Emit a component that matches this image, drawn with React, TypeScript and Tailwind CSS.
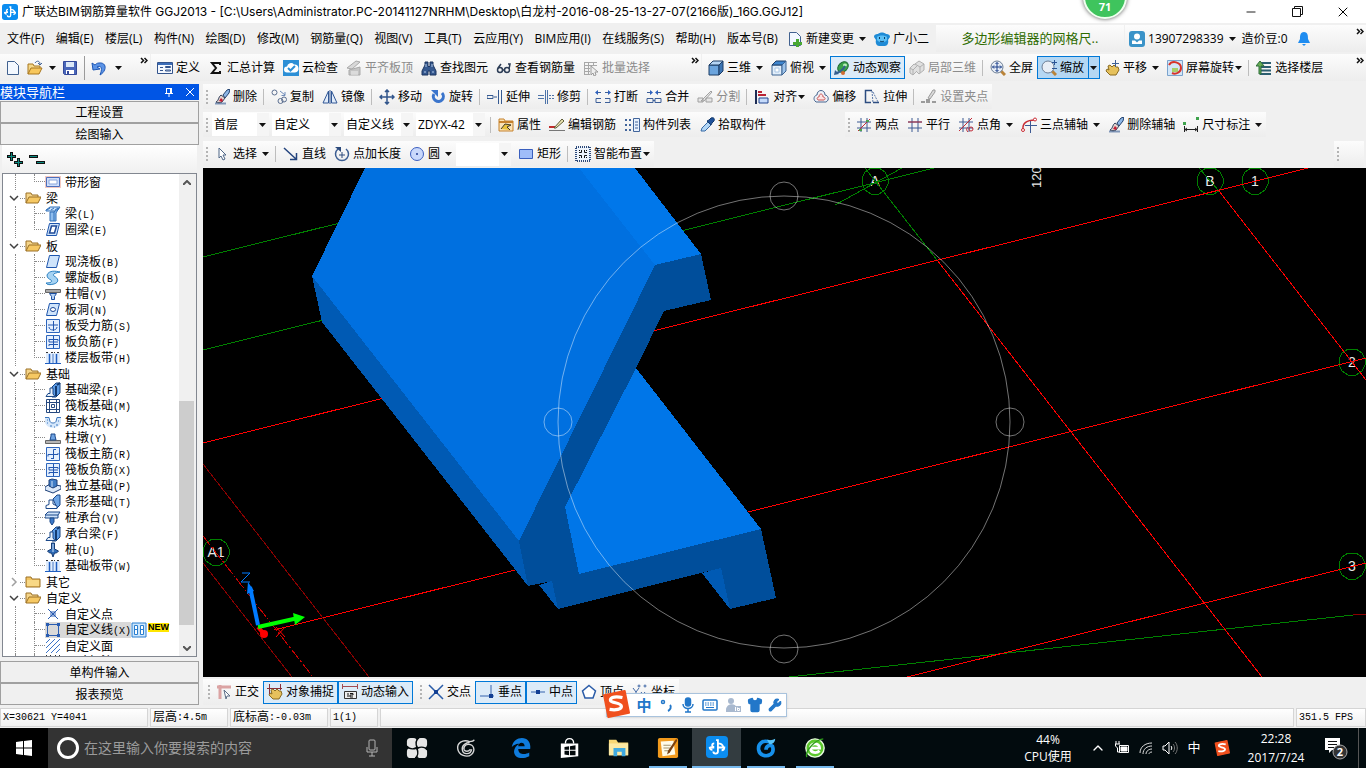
import type { ReactNode } from "react";
import { ChevronUp, Minus, Shirt, Wrench, X } from "lucide-react";

const UI_FONT = "font-['Open_Sans','Noto_Sans_CJK_SC',sans-serif]";
const BAR = "flex items-center bg-linear-to-b from-[#fcfcfc] to-[#ededed]";

const page = <path d="M2.500 1.500h7l4 4v9h-11z" fill="#f3f8ff" stroke="#41618f" />;
const axes = <path d="M1 5h14M1 11h14M5 1v14M11 1v14" stroke="#3d5a93" fill="none" />;
const slab = <path d="M4.500 1.500h10l-3 12h-10z" fill="#cfe4fb" stroke="#1f56ad" />;
const box = <path d="M1.500 1.500h13v13h-13z" fill="#e5f0fe" stroke="#2e66bd" />;
const brush = (
  <>
    <path d="M1 14.500h11" stroke="#8096b8" strokeWidth="2" />
    <path d="M9 6l4-5 3-1-1 4-4 5z" fill="#8db6e6" stroke="#24436f" />
    <path d="M7 6l4 3-3 4c-2 1-4 1-6 0 3-1 2-5 5-7z" fill="#e3d3cf" stroke="#34435e" />
    <path d="M7 9l2 2-1 2-3-1z" fill="#c32034" />
  </>
);
const beamBlock = (
  <>
    <path d="M7 5l4-4h4v10l-4 4H7z" fill="#5b9be6" stroke="#16427f" />
    <path d="M11 4v10M12 3l3-2" stroke="#123a70" strokeWidth="2" />
    <path d="M1 14.500l2-3h2V6h3v6l2 2.500z" fill="#e6f0fb" stroke="#1b4889" />
  </>
);
const floorStrip = (
  <>
    <path d="M1 3h14v10H1z" fill="#dfecfc" />
    <path d="M1 2.500h3M6 2.500h4M12 2.500h3" stroke="#333" strokeDasharray="2 1" />
    <path d="M0 13.500h16" stroke="#1f5ec0" />
    <path d="M4.500 4v9M11.500 4v9" stroke="#1f5ec0" strokeWidth="1.500" />
    <path d="M8 4v9" stroke="#4a7cc8" />
  </>
);
const magnifier = (
  <>
    <path d="M11 11l4 4" stroke="#b98339" strokeWidth="3" />
    <circle cx="7" cy="7" r="6" fill="#e8eef6" stroke="#6d7f96" />
  </>
);
const hand = <path d="M4 6l2-1 2 2 2-2 2 2 2 0 1 3-3 5H6L2 11l1-2 2 1z" fill="#e6c15c" stroke="#8a6b21" />;

const icons: Record<string, ReactNode> = {
  page,
  open: (
    <>
      <path d="M1 14V4h5l1 2h6v2" fill="#f5d889" stroke="#a8761f" />
      <path d="M1 14l3-6h11l-3 6z" fill="#f7c75d" stroke="#a8761f" />
      <path d="M8 3c2-3 5-2 5 1m-2-1l2 2 2-2" fill="none" stroke="#426497" />
    </>
  ),
  save: (
    <>
      <path d="M1.500 1.500h13v13h-12l-1-1z" fill="#4a67ba" stroke="#34499a" />
      <path d="M4 2h8v5H4z" fill="#dce8f7" />
      <path d="M4 10h8v4H4z" fill="#fff" />
      <path d="M5 11h2v3H5z" fill="#34499a" />
    </>
  ),
  undo: <path d="M1 3l1 7 7-1-3-2c4-2 6 1 3 8 7-4 7-13-1-12-2 0-3 1-4 2z" fill="#5b93e6" stroke="#1f58b5" />,
  form: (
    <>
      <path d="M.5 2.500h15v11H.5z" fill="#f4f8fe" stroke="#33548d" />
      <path d="M1 3h14v2H1z" fill="#3c6db8" />
      <path d="M3 7.500h3M3 10.500h3" stroke="#33548d" />
      <path d="M8.500 6.500h5v1h-5zM8.500 10h5v1h-5z" fill="none" stroke="#33548d" />
    </>
  ),
  sigma: <path d="M12 5V3H4l4 5-4 5h8v-2" fill="none" stroke="#111" strokeWidth="2" />,
  cloud: (
    <>
      <path d="M0 0h16v16H0z" fill="#2c8fd6" />
      <path d="M4 12.500a3 3 0 010-6 4 4 0 017-2 4 4 0 011 8z" fill="#fff" />
      <path d="M5 8l2.500 2.500L12 6" fill="none" stroke="#2c8fd6" strokeWidth="2" />
    </>
  ),
  level: (
    <>
      <path d="M1 8l9-7 4 1-8 7z" fill="#d8d8d8" stroke="#a9a9a9" />
      <path d="M3 10v5h11V7z" fill="#c4c4c4" stroke="#a9a9a9" />
      <path d="M5 12h7M5 14h7" stroke="#f2f2f2" />
    </>
  ),
  binoculars: (
    <>
      <path d="M4 2h3v4l1 1 1-1V2h3v3l3 6v4H9v-4H7v4H1v-4l3-6z" fill="#35588f" stroke="#1c355f" />
      <path d="M3 12h2M11 12h2M5 4v3M11 4v3" stroke="#b4cbea" />
    </>
  ),
  glasses: (
    <>
      <circle cx="4" cy="10" r="2.500" fill="none" stroke="#2c3c55" strokeWidth="1.500" />
      <circle cx="11" cy="10" r="2.500" fill="none" stroke="#2c3c55" strokeWidth="1.500" />
      <path d="M6 10h3M2 8l3-4M13 9l1-5h-2" fill="none" stroke="#2c3c55" strokeWidth="1.500" />
    </>
  ),
  batch: (
    <>
      <path d="M1 2.500h13M1 5.500h13M1 8.500h6M1 11.500h6M1 14.500h6M1.500 2v13M5.500 2v13M10.500 2v4" stroke="#a8a8a8" />
      <path d="M8 6l7 6h-3l1 3-2 1-1-3-2 2z" fill="#eee" stroke="#9b9b9b" />
    </>
  ),
  cube: (
    <>
      <path d="M1 5h10v10H1z" fill="#6ba4dd" stroke="#1d3c64" />
      <path d="M1 5l4-4h10l-4 4z" fill="#b5d5f4" stroke="#1d3c64" />
      <path d="M11 5l4-4v10l-4 4z" fill="#3c75b4" stroke="#1d3c64" />
    </>
  ),
  cubeTop: (
    <>
      <path d="M1 5h10v10H1z" fill="#e2eefa" stroke="#3c6493" />
      <path d="M1 5l4-4h10l-4 4z" fill="#3f86cf" stroke="#1d3c64" />
      <path d="M11 5l4-4v10l-4 4z" fill="#9fc4ea" stroke="#3c6493" />
      <path d="M4 8h4v4H4z" fill="#fff" stroke="#a9c6e4" />
    </>
  ),
  orbit: (
    <>
      <ellipse cx="9" cy="7" rx="6" ry="4.500" transform="rotate(-45 9 7)" fill="#3aa24a" stroke="#1f6a35" />
      <ellipse cx="11" cy="5" rx="2" ry="1.500" fill="#b9eebc" />
      <path d="M2 13C7 12 9 10 11 6" fill="none" stroke="#355f8f" strokeWidth="2" />
      <path d="M0 15l1-5 4 4z" fill="#355f8f" />
      <circle cx="9" cy="13" r="2" fill="#d06a32" />
    </>
  ),
  part3d: (
    <g stroke="#b0b0b0" fill="#e0e0e0">
      <path d="M1 8l4-4 3 2v5l-4 4-3-2z" />
      <path d="M6 4l4-3 5 3v6l-5 4-3-3" />
      <path d="M1 8l3 2 4-4M4 10v5M6 4l5 3 4-3M11 7v6" fill="none" />
    </g>
  ),
  fit: (
    <>
      {magnifier}
      <path d="M7 2.500v9M2.500 7h9M5.500 4L7 2.500 8.500 4M5.500 10L7 11.500 8.500 10M4 5.500L2.500 7 4 8.500M10 5.500L11.500 7 10 8.500" stroke="#1a3e8a" fill="none" />
    </>
  ),
  zoom: (
    <>
      {magnifier}
      <path d="M11 2.500h5M13.500 0v5M11 8.500h5" stroke="#2c5596" />
    </>
  ),
  pan: (
    <>
      {hand}
      <path d="M11.500 0v7M8 3.500h7" stroke="#3c5f95" />
    </>
  ),
  rotateView: (
    <>
      <path d="M.5.500h15v15H.5z" fill="#d3e6f8" stroke="#7aa3cd" />
      <path d="M5 8h6v4H5z" fill="#a8cf6a" />
      <path d="M2 5C5 0 14 2 14 8c0 4-5 7-9 5" fill="none" stroke="#d7332a" strokeWidth="2" />
    </>
  ),
  floors: (
    <>
      <path d="M4 3h11M4 7h11M4 10.500h11M4 14h11" stroke="#2c5e70" strokeWidth="2" />
      <path d="M0 6l4-5 4 5H5v8H3V6z" fill="#67ad53" stroke="#2c6c3b" />
    </>
  ),
  brush,
  copy: (
    <g fill="none" stroke="#5c6f90">
      <circle cx="3.500" cy="3.500" r="2.500" />
      <circle cx="9.500" cy="12" r="2.500" />
      <circle cx="13" cy="10.500" r="2.500" />
      <path d="M9 2l5 4M14 3v3.500h-3.500" stroke="#6f8bb9" />
    </g>
  ),
  mirror: <path d="M6.500 2v12H1zM9.500 2v12H15zM8 1v14" fill="#e1ecfa" stroke="#315795" />,
  move: <path d="M8 1v14M1 8h14M6 3l2-2 2 2M6 13l2 2 2-2M3 6L1 8l2 2M13 6l2 2-2 2" fill="none" stroke="#32568c" strokeWidth="1.500" />,
  rotate: (
    <>
      <path d="M4 5a5 5 0 108-1" fill="none" stroke="#3b75cc" strokeWidth="3" />
      <path d="M1 1h7v7z" fill="#3b75cc" />
    </>
  ),
  extend: <path d="M0 6.500h6v3H0zM7 8h3M11.500 1v14M14.500 1v14" fill="none" stroke="#355a92" />,
  trim: <path d="M0 6.500h6M0 9.500h6M7.500 1v14M9.500 1v14M11 6.500h2M14 6.500h2M11 9.500h2M14 9.500h2" fill="none" stroke="#4d73a9" />,
  breakLine: (
    <>
      <path d="M0 3.500L3 1v5zM16 3.500L13 1v5z" fill="#2f62bd" />
      <path d="M3 3.500h3M10 3.500h3M6 9.500H1v4h5M10 9.500h5v4h-5" fill="none" stroke="#3d5f98" />
    </>
  ),
  merge: (
    <>
      <path d="M7 3.500L4 1v5zM9 3.500L12 1v5z" fill="#2f62bd" />
      <path d="M1 3.500h3M12 3.500h3M1 9.500h6v4H1zM9 9.500h6v4H9zM7 11.500h2" fill="none" stroke="#3d5f98" />
    </>
  ),
  split: <path d="M1 9h5v4H1zM9 9h6v4H9zM4 12l10-10 1 1-8 9z" fill="#e6e6e6" stroke="#a0a0a0" />,
  align: (
    <>
      <path d="M2 1v14" stroke="#1d2c55" strokeWidth="2" />
      <path d="M5 9h9v5H5z" fill="#c5dafa" stroke="#20448f" />
      <path d="M4 6h8M4 3h4" stroke="#b92435" strokeWidth="2" />
    </>
  ),
  offset: (
    <>
      <path d="M3 13C-1 10 2 6 4 6c0-6 8-6 8 0 3 0 5 5 1 7z" fill="#eef2f8" stroke="#46648f" />
      <path d="M5 11c-2-2 0-3 1-3 0-4 4-4 4 0 2 0 3 2 1 3z" fill="#fce3e3" stroke="#c95555" />
    </>
  ),
  stretch: (
    <>
      <path d="M8 1.500H1.500v12H7M9 13.500h6" fill="none" stroke="#2c4c80" strokeWidth="1.500" />
      <path d="M8 2l1 12M9 3l5 10" stroke="#5d7aa9" strokeDasharray="2 1" />
    </>
  ),
  grip: (
    <>
      <path d="M0 13h4M11 13h4" stroke="#9b9b9b" strokeWidth="2" />
      <path d="M5 10h4v4H5z" fill="#9b9b9b" />
      <path d="M7 9l5-8h2v2L9 10z" fill="#d9d9d9" stroke="#9b9b9b" />
    </>
  ),
  props: (
    <>
      <path d="M1 2h5l1 2h8v10H1z" fill="#fbe2b6" stroke="#c6822d" />
      <path d="M1 5h14" stroke="#c6822d" strokeWidth="2" />
      <path d="M3 12l4-5 6 1-4 2 3 3" fill="#e9c13b" stroke="#3f3a28" />
    </>
  ),
  rebar: (
    <>
      <path d="M0 13.500h16" stroke="#777" />
      <path d="M0 10h6" stroke="#c02d2d" strokeWidth="2" />
      <path d="M5 11l8-9 2 2-8 7z" fill="#ece5b2" stroke="#5c5a36" />
    </>
  ),
  list: (
    <>
      <path d="M1 3h2M5 3h2M1 8h2M5 8h2M1 13h2M5 13h2" stroke="#42659b" strokeWidth="2" />
      <path d="M9.500 1.500h6v13h-6z" fill="#e8f1fd" stroke="#42659b" />
      <path d="M11 5h3M11 8h3M11 11h3" stroke="#42659b" />
    </>
  ),
  dropper: (
    <>
      <path d="M2 14l1-3 6-6 3 3-6 6z" fill="#b2d6f6" stroke="#386aa5" />
      <path d="M8 4l2-1 2-2c3-1 4 1 3 3l-2 2-1 2z" fill="#1e5199" stroke="#133869" />
    </>
  ),
  twoPoint: (
    <>
      {axes}
      <path d="M2 14L14 2" stroke="#c12c38" />
      <path d="M3 12h3v2H3zM10 3h3v2h-3z" fill="#4aa24f" />
    </>
  ),
  parallel: (
    <>
      {axes}
      <path d="M1 5h14" stroke="#b22a3c" />
    </>
  ),
  angle: (
    <>
      {axes}
      <path d="M1 14L14 1M10 15c-3-3 0-5 0-5" stroke="#c12c38" fill="none" />
      <circle cx="13" cy="12" r="2" fill="none" stroke="#c12c38" />
    </>
  ),
  arcAxis: (
    <>
      <path d="M4 8.500h12M9.500 4v12" stroke="#3d5a93" />
      <path d="M2 13C1 6 6 3 14 3" fill="none" stroke="#c92c35" strokeWidth="1.500" />
      <circle cx="2" cy="13" r="1.500" fill="#fff" stroke="#c92c35" />
      <circle cx="14" cy="2.500" r="1.500" fill="#fff" stroke="#c92c35" />
    </>
  ),
  dimension: (
    <>
      <path d="M1.500 9v6M14.500 9v6M2 12.500h12M4 11l-2 1.500L4 14M12 11l2 1.500-2 1.500" stroke="#222" fill="none" />
      <path d="M0 5h3v3H0zM13 0h3v3h-3z" fill="#3ea34c" />
    </>
  ),
  cursor: <path d="M5 2v10l2-2 2 4 2-1-2-4h3z" fill="#fff" stroke="#4f6787" />,
  line: <path d="M1 2l12 11M7 13.500h6.500V7" fill="none" stroke="#24447e" strokeWidth="1.500" />,
  pointLen: (
    <>
      <path d="M4 3a6.500 6.500 0 108 0" fill="none" stroke="#3b5d92" strokeWidth="1.500" />
      <path d="M1 1h6v5z" fill="#2c4a7c" />
      <path d="M8 6v6M5 9h6" stroke="#2c4a7c" />
    </>
  ),
  circle: (
    <>
      <circle cx="8" cy="8" r="6.500" fill="#c9d8fb" stroke="#3c5fc0" />
      <circle cx="8" cy="8" r="1" fill="#213d95" />
    </>
  ),
  rect: <path d="M1.500 3.500h13v9h-13z" fill="#9fbdf9" stroke="#3a5fbe" />,
  smart: (
    <>
      <path d="M1 1h14v14H1z" fill="#eef4fc" stroke="#2d4a7a" strokeWidth="2" strokeDasharray="1 1" />
      <path d="M6.500 4v2.500H4M9.500 4v2.500H12M6.500 12V9.500H4M9.500 12V9.500H12" fill="none" stroke="#111" />
      <path d="M4 4h1v1H4zM11 4h1v1h-1zM4 11h1v1H4zM11 11h1v1h-1z" fill="#111" />
    </>
  ),
  ortho: (
    <>
      <path d="M1 3h14M4 1v14" stroke="#dba3a3" strokeWidth="3" />
      <path d="M8 6l6 6-3 0-1 3z" fill="#fff" stroke="#5c6d86" />
    </>
  ),
  snap: (
    <>
      {hand}
      <path d="M0 4.500h15M2.500 0v10M13.500 0v6" stroke="#8a3038" />
    </>
  ),
  dynInput: (
    <>
      <path d="M.5 0v5M15.500 0v5M1 2.500h14" stroke="#a34a52" />
      <path d="M2.500 7.500h12v7h-12z" fill="#eee" stroke="#333" />
      <path d="M6 9v4M8 9.500h3v1.500H8v2h3" stroke="#111" fill="none" />
    </>
  ),
  cross: (
    <>
      <path d="M1 1l14 14M15 1L1 15" stroke="#2b5ca8" strokeWidth="1.500" />
      <path d="M6 6h4v4H6z" fill="#123f93" />
    </>
  ),
  perp: (
    <>
      <path d="M1 12h14M12 1v11" stroke="#3563ad" />
      <path d="M10 10h4v4h-4z" fill="#123f93" />
    </>
  ),
  mid: (
    <>
      <path d="M1 8h14" stroke="#3563ad" />
      <path d="M6 6h4v4H6z" fill="#123f93" />
    </>
  ),
  vertex: <path d="M8 1.500L14.500 7 12 14H4L1.500 7z" fill="#fff" stroke="#2b5ca8" strokeWidth="1.500" />,
  coord: (
    <g fill="none" stroke="#3f67a6">
      <path d="M1 4l3 4v5M7 4L4 8M1 14.500h13M9 8l4 5M13 8l-4 5" />
      <circle cx="7" cy="2" r="1" />
      <circle cx="13" cy="2" r="1" />
    </g>
  ),
  changeDoc: (
    <>
      {page}
      <path d="M9 8h3v3h3v3h-3v2H9v-2H6v-3h3z" fill="#49a833" />
    </>
  ),
  mascot: (
    <>
      <path d="M0 6c0-3 3-3 4-3 2-2 6-2 8 0 1 0 4 0 4 3l-2 3c1 3-1 6-3 6H5c-2 0-4-3-3-6z" fill="#1f8bd6" />
      <path d="M3 6c2-2 8-2 10 0v3c-2 3-8 3-10 0z" fill="#5cc0f5" />
      <path d="M5 7h1M10 7h1" stroke="#0d3f68" strokeWidth="2" />
      <path d="M6 10c1 1 3 1 4 0" fill="none" stroke="#0d3f68" />
    </>
  ),
  user: (
    <>
      <rect width="16" height="16" rx="3" fill="#3a93c8" />
      <circle cx="8" cy="5.500" r="3" fill="#fff" />
      <path d="M3 13V9.500h3l2 2 2-2h3V13z" fill="#fff" />
    </>
  ),
  bell: (
    <>
      <path d="M8 1c4 0 4 4 4 7l2 4H2l2-4c0-3 0-7 4-7z" fill="#1f8cf0" />
      <path d="M6 13h4l-2 2z" fill="#1f8cf0" />
    </>
  ),
  // component tree
  stripWindow: (
    <>
      <path d="M0 2h16v12H0z" fill="#f2c9c1" />
      <path d="M1.500 3.500h13v9h-13z" fill="#cfdefa" stroke="#4c6fbd" />
      <path d="M4 6h8v4H4z" fill="#fff" stroke="#8aa6dc" />
    </>
  ),
  beam: (
    <>
      <path d="M1 4l4-3h10l-3 4H1z" fill="#c8e0fa" stroke="#2f6fb8" />
      <path d="M5 6h4v9H5zM9 6l5-4-3 5v8H9" fill="#8ebdee" stroke="#2f6fb8" />
      <path d="M2 4l3-2M6 4l3-2M10 4l3-2" stroke="#2f6fb8" />
    </>
  ),
  ringBeam: (
    <>
      {slab}
      <path d="M6.500 4h5l-2 7h-5z" fill="#fff" stroke="#1f4a98" strokeWidth="1.500" />
    </>
  ),
  slab,
  spiral: <path d="M2 5c2-5 9-4 13-3-5 1-8 2-6 4 4 2 6 6 0 8-4 1-7 1-8-1 4 0 7-1 5-3-2-1-4-2-4-5z" fill="#a6d3f3" stroke="#2d82c3" />,
  capital: (
    <>
      <path d="M.5 3.500h15v3H.5z" fill="#a9a9a9" stroke="#666" />
      <path d="M4.500 7.500h7l-2 3v3h-3v-3z" fill="#b6d2f5" stroke="#1b4fa0" />
    </>
  ),
  hole: (
    <>
      {slab}
      <ellipse cx="8" cy="7.500" rx="2.500" ry="2" fill="#fff" stroke="#1f4a98" />
    </>
  ),
  forceBar: (
    <>
      {box}
      <path d="M3 7h10M8.500 3v10M4 9c0 4 8 4 8 0" fill="none" stroke="#2257b0" />
    </>
  ),
  negBar: (
    <>
      {box}
      <path d="M4 12V10.500h9M4 5.500h9V7M8.500 2v12M4 5v3h9" fill="none" stroke="#2257b0" />
    </>
  ),
  floorStrip,
  beamBlock,
  raft: (
    <>
      <path d="M1.500 1.500h13v13h-13z" fill="#fff" stroke="#26497f" />
      <path d="M4.500 1v14M11.500 1v14M1 4.500h14M1 11.500h14M6.500 6.500h3v3h-3z" fill="none" stroke="#26497f" />
    </>
  ),
  sump: (
    <>
      <path d="M0 3.500h4l1 4c1 2 5 2 6 0l1-4h4v5c-2 7-14 7-16 0z" fill="#d5e7fb" />
      <path d="M0 3.500h4l1 4c1 2 5 2 6 0l1-4h4" fill="none" stroke="#3b76bd" />
      <path d="M2 9h1M5 12h2M9 13h1M11 11h2M2 6h1M13 7h1" stroke="#3b76bd" />
    </>
  ),
  pier: (
    <>
      <path d="M.5 10.500h15v3H.5z" fill="#b5b5b5" stroke="#666" />
      <path d="M5 10l1-4V4h4v2l1 4z" fill="#6fa3e2" stroke="#1b4889" />
    </>
  ),
  mainBar: (
    <>
      {box}
      <path d="M3 10.500V8.500h10V7M8.500 12V3.500H11M6 12.500h3" fill="none" stroke="#2257b0" />
    </>
  ),
  isolated: (
    <>
      <path d="M0 9l5-3 11 2v3l-8 4-8-3z" fill="#dce9f9" stroke="#1c3f77" />
      <path d="M4 2l3-1 5 1v6l-4 2-4-2z" fill="#3f7cc5" stroke="#1c3f77" />
      <path d="M7 3v6" stroke="#cfe2f8" />
    </>
  ),
  stripBase: (
    <>
      <path d="M8 5l4-4h3v10l-3 3z" fill="#6fa6e6" stroke="#1b4889" />
      <path d="M1 14.500v-3l3-1V6h4v4l4 2v2.500z" fill="#fff" stroke="#1b4889" />
    </>
  ),
  pileCap: (
    <>
      <path d="M0 5l3-3h12l-2 3v3H0zM0 5h13" fill="#cfe3fa" stroke="#1b4889" />
      <path d="M5 8h4v4l-2 3-2-3z" fill="#3b78c8" stroke="#1b4889" />
    </>
  ),
  pile: (
    <>
      <path d="M6.500 1h3v6l4 2-2 2h-2L8 15l-1.500-4h-2l-2-2 4-2z" fill="#2f6db9" stroke="#163c74" />
      <path d="M8 2v8" stroke="#cfe3fa" />
    </>
  ),
  customPoint: <path d="M3 3l10 10M13 3L3 13M6 6h4v4H6z" fill="#fff" stroke="#2a5db2" />,
  customLine: (
    <>
      <path d="M2.500 2.500h11v11h-11z" fill="none" stroke="#2a5db2" />
      <path d="M1 1h3v3H1zM12 1h3v3h-3zM1 12h3v3H1zM12 12h3v3h-3z" fill="#2a5db2" />
    </>
  ),
  customFace: <path d="M1 5l4-4M1 10l9-9M1 15L15 1M6 15l9-9M11 15l4-4" stroke="#3a73c8" />,
  sizeMark: <path d="M1.500 1v8M14.500 1v8M5.500 1v8M10.500 1v8M1 5h14" stroke="#333" fill="none" />,
  folder: (
    <>
      <path d="M1 13V3h5l1 2h8v8z" fill="#f2c463" stroke="#9b7127" />
      <path d="M2 6h12v6H2z" fill="#f8d886" />
    </>
  ),
  folderOpen: (
    <>
      <path d="M1 13V3h5l1 2h6v3" fill="#f5d58a" stroke="#9b7127" />
      <path d="M1 13l3-6h12l-3 6z" fill="#f6c863" stroke="#9b7127" />
    </>
  ),
};

function Icon({ name, className = "size-4" }: { name: string; className?: string }) {
  return (
    <svg viewBox="0 0 16 16" fill="none" className={`${className} shrink-0`} aria-hidden>
      {icons[name]}
    </svg>
  );
}

function Caret({ tight = false }: { tight?: boolean }) {
  return (
    <svg viewBox="0 0 7 4" className={`h-1 w-[7px] shrink-0 ${tight ? "-ml-0.5" : "ml-0.5"}`} aria-hidden>
      <path d="M0 0h7L3.500 4z" fill="#111" />
    </svg>
  );
}

type ToolProps = { icon: string; label: string; off?: boolean; on?: boolean; caret?: boolean; tight?: boolean };

function Tool({ icon, label, off, on, caret, tight }: ToolProps) {
  const look = on ? "bg-[#dcebf8] outline outline-1 -outline-offset-1 outline-[#0078d7]" : "";
  return (
    <button disabled={off} className={`flex h-[23px] shrink-0 items-center gap-[3px] px-1 whitespace-nowrap ${look} ${off ? "text-[#8b8b8b]" : ""}`}>
      <Icon name={icon} />
      <span>{label}</span>
      {caret && <Caret />}
      {tight && <Caret tight />}
    </button>
  );
}

function Sep() {
  return <span className="mr-[3px] ml-0.5 h-4 w-px shrink-0 bg-[#bdbdbd]" />;
}

function Grip() {
  return (
    <span className="flex w-[7px] shrink-0 flex-col items-center gap-0.5 pl-px">
      {[0, 1, 2, 3].map((i) => (
        <span key={i} className="size-0.5 bg-[#b4b4b4]" />
      ))}
    </span>
  );
}

function More() {
  return (
    <button className="flex h-full items-start px-0.5 pt-0.5" aria-label="更多">
      <svg viewBox="0 0 8 7" className="mt-px h-[7px] w-2" fill="none" stroke="#111" strokeWidth="1.500">
        <path d="M1 1l2.500 2.500L1 6M4.500 1L7 3.500 4.500 6" />
      </svg>
    </button>
  );
}

function Combo({ value, label, className }: { value: string; label: string; className: string }) {
  return (
    <label className={`mr-[3px] flex h-[23px] shrink-0 items-center bg-white pl-0.5 ${className}`}>
      <select aria-label={label} className="w-0 flex-1 appearance-none bg-white outline-none">
        <option>{value}</option>
      </select>
      <span className="flex h-full w-3 items-center justify-center bg-[#f5f5f5]">
        <Caret tight />
      </span>
    </label>
  );
}

const menus = ["文件(F)", "编辑(E)", "楼层(L)", "构件(N)", "绘图(D)", "修改(M)", "钢筋量(Q)", "视图(V)", "工具(T)", "云应用(Y)", "BIM应用(I)", "在线服务(S)", "帮助(H)", "版本号(B)"];

type Leaf = { icon: string; name: string; hotkey?: string; selected?: boolean };
type Group = { name?: string; closed?: boolean; items: Leaf[] };

const tree: Group[] = [
  { items: [{ icon: "stripWindow", name: "带形窗" }] },
  { name: "梁", items: [{ icon: "beam", name: "梁", hotkey: "L" }, { icon: "ringBeam", name: "圈梁", hotkey: "E" }] },
  {
    name: "板",
    items: [
      { icon: "slab", name: "现浇板", hotkey: "B" },
      { icon: "spiral", name: "螺旋板", hotkey: "B" },
      { icon: "capital", name: "柱帽", hotkey: "V" },
      { icon: "hole", name: "板洞", hotkey: "N" },
      { icon: "forceBar", name: "板受力筋", hotkey: "S" },
      { icon: "negBar", name: "板负筋", hotkey: "F" },
      { icon: "floorStrip", name: "楼层板带", hotkey: "H" },
    ],
  },
  {
    name: "基础",
    items: [
      { icon: "beamBlock", name: "基础梁", hotkey: "F" },
      { icon: "raft", name: "筏板基础", hotkey: "M" },
      { icon: "sump", name: "集水坑", hotkey: "K" },
      { icon: "pier", name: "柱墩", hotkey: "Y" },
      { icon: "mainBar", name: "筏板主筋", hotkey: "R" },
      { icon: "negBar", name: "筏板负筋", hotkey: "X" },
      { icon: "isolated", name: "独立基础", hotkey: "P" },
      { icon: "stripBase", name: "条形基础", hotkey: "T" },
      { icon: "pileCap", name: "桩承台", hotkey: "V" },
      { icon: "beamBlock", name: "承台梁", hotkey: "F" },
      { icon: "pile", name: "桩", hotkey: "U" },
      { icon: "floorStrip", name: "基础板带", hotkey: "W" },
    ],
  },
  { name: "其它", closed: true, items: [] },
  {
    name: "自定义",
    items: [
      { icon: "customPoint", name: "自定义点" },
      { icon: "customLine", name: "自定义线", hotkey: "X", selected: true },
      { icon: "customFace", name: "自定义面" },
      { icon: "sizeMark", name: "尺寸标注", hotkey: "W" },
    ],
  },
];

function LeafRow({ leaf, last }: { leaf: Leaf; last: boolean }) {
  const dots = "border-dotted border-[#8a8a8a]";
  return (
    <li className="flex h-4 items-center">
      <span className={`ml-3 h-full w-[19px] shrink-0 border-l ${dots}`} />
      <span className={`h-full w-[11px] shrink-0 ${last ? "" : `border-l ${dots}`}`}>
        <span className={`block h-1/2 border-b ${dots} ${last ? "border-l" : ""}`} />
      </span>
      <button className={`flex h-4 items-center gap-1 whitespace-nowrap ${leaf.selected ? "bg-[#d9d9d9]" : ""}`}>
        <Icon name={leaf.icon} />
        <span>
          {leaf.name}
          {leaf.hotkey && <span className="font-['Liberation_Mono',monospace] text-[10px]">({leaf.hotkey})</span>}
        </span>
      </button>
      {leaf.selected && (
        <>
          <svg viewBox="0 0 16 16" className="size-4 shrink-0" fill="#fff" stroke="#2a7fd0" aria-hidden>
            <path d="M1 1h14v14H1z" fill="#cde6fb" />
            <path d="M3.500 3.500h3v9h-3zM9.500 3.500h3v9h-3zM4 7.500h2M10 7.500h2" />
          </svg>
          <span className="mb-1.5 ml-px bg-[#ffe600] font-['Liberation_Sans',sans-serif] text-[9px] leading-[9px] font-bold">NEW</span>
        </>
      )}
    </li>
  );
}

function Sidebar() {
  const tab = "h-[22px] shrink-0 border border-[#a0a0a0] bg-[#f0f0f0] text-xs leading-5";
  const arrow = "flex h-4 shrink-0 items-center justify-center";
  return (
    <aside className="mr-1 flex w-[199px] shrink-0 flex-col font-['Noto_Sans_CJK_SC',sans-serif] text-xs">
      <header className="mb-px flex h-4 shrink-0 items-center bg-[#0055e5] text-[13px] leading-4 text-white">
        <h2 className="flex-1">模块导航栏</h2>
        <button className="mr-3" aria-label="固定">
          <svg viewBox="0 0 10 10" className="size-2.5" fill="none" stroke="#fff">
            <path d="M2.500 1v5M7.500 1v5M6.500 1v5M2 1.500h6M1 6.500h8M5 7v3" />
          </svg>
        </button>
        <button className="mr-[5px]" aria-label="关闭">
          <svg viewBox="0 0 8 8" className="size-2" stroke="#fff">
            <path d="M0 0l8 8M8 0L0 8" />
          </svg>
        </button>
      </header>
      <button className={tab}>工程设置</button>
      <button className={tab}>绘图输入</button>
      <div className="mx-0.5 flex h-7 shrink-0 items-center gap-1.5 bg-linear-to-b from-white to-[#f0f0f0] px-1">
        <button aria-label="展开">
          <svg viewBox="0 0 17 16" className="h-4 w-[17px]" fill="none">
            <path d="M1 5.500h9M5.500 1v9M8 11.500h9M12.500 7v9" stroke="#111" strokeWidth="3" />
            <path d="M2 5.500h7M5.500 2v7M9 11.500h7M12.500 8v7" stroke="#0c8a80" />
          </svg>
        </button>
        <button aria-label="折叠">
          <svg viewBox="0 0 17 16" className="h-4 w-[17px]" fill="none">
            <path d="M0 5.500h9M7 11.500h9" stroke="#111" strokeWidth="3" />
            <path d="M1 5.500h7M8 11.500h7" stroke="#0c8a80" />
          </svg>
        </button>
      </div>
      <div className="mx-0.5 mb-1 flex min-h-0 flex-1 border border-[#828790] bg-white">
        <ul className="min-w-0 flex-1 overflow-hidden leading-4">
          {tree.map((g, n) => (
            <li key={n}>
              {g.name && (
                <button className="flex h-4 items-center pl-[5px]">
                  <svg viewBox="0 0 12 12" className="size-3" fill="none" strokeWidth="1.500">
                    {g.closed ? <path d="M4 2l4 4-4 4" stroke="#a0a0a0" /> : <path d="M2 4l4 4 4-4" stroke="#404040" />}
                  </svg>
                  <span className="w-[5px] border-t border-dotted border-[#8a8a8a]" />
                  <Icon name={g.closed ? "folder" : "folderOpen"} />
                  <span className="ml-[5px]">{g.name}</span>
                </button>
              )}
              <ul>
                {g.items.map((leaf, i) => (
                  <LeafRow key={leaf.name} leaf={leaf} last={i === g.items.length - 1} />
                ))}
              </ul>
            </li>
          ))}
        </ul>
        <div className="flex w-[17px] shrink-0 flex-col bg-[#f0f0f0] pr-0.5">
          <span className={arrow}>
            <svg viewBox="0 0 8 5" className="h-[5px] w-2" fill="none" stroke="#555" strokeWidth="2">
              <path d="M0 5l4-4 4 4" />
            </svg>
          </span>
          <span className="flex-[211]" />
          <span className="flex-[225] bg-[#cdcdcd]" />
          <span className="flex-[15]" />
          <span className={arrow}>
            <svg viewBox="0 0 8 5" className="h-[5px] w-2" fill="none" stroke="#555" strokeWidth="2">
              <path d="M0 0l4 4 4-4" />
            </svg>
          </span>
        </div>
      </div>
      <button className={tab}>单构件输入</button>
      <button className={`${tab} mb-0.5`}>报表预览</button>
    </aside>
  );
}

const bubbles: [number, number, string][] = [
  [875, 181, "A"],
  [1210, 181, "B"],
  [1255, 181, "1"],
  [1352, 362, "2"],
  [1352, 566, "3"],
  [216, 552, "A1"],
];

function Scene() {
  return (
    <svg viewBox="203 168 1163 509" preserveAspectRatio="xMinYMin slice" className="min-h-0 w-full flex-1 bg-black" fill="none">
      <g fill="#e8e8e8" textAnchor="middle" className="font-['Liberation_Sans',sans-serif] text-[14px]">
        {bubbles.map(([x, y, t]) => (
          <text key={t} x={x} y={y + 5}>{t}</text>
        ))}
        <text transform="translate(1041 188) rotate(-90)" textAnchor="start" className="text-[13px]">120</text>
      </g>
      <g shapeRendering="crispEdges">
        <g stroke="#008000">
          <path d="M203 257L400 208M203 350L934 168M865 168L937 260M835 205L902 168M1199 168L1219 191M789 677L1353 615" />
          {bubbles.map(([x, y, t]) => (
            <path key={t} d={`M${x - 4} ${y - 13}h8l6 4 3 6v6l-3 6-6 4h-8l-6-4-3-6v-6l3-6z`} />
          ))}
        </g>
        <path d="M203 443L1308 168M274 630L1366 358M907 677L1366 563M937 260L1262 677M1219 191L1366 380" stroke="#ff0000" />
        <path d="M203 464L369 677M203 563L292 677M1353 615L1366 614" stroke="#8b0000" />
        <path d="M203 536L313 677" stroke="#c80000" strokeDasharray="12 2 2 2" />
        <path d="M365 168L312 276 519 541 655 265 579 168z" fill="#0070e0" />
        <path d="M579 168h56l66 86-46 11z" fill="#0077ea" />
        <path d="M312 276l10 46 206 264-9-45z" fill="#005ab4" />
        <path d="M636 368l125 161-182 45-14-67z" fill="#0076e8" />
        <path d="M539 585l13-4 6 28zM702 573l19-5 9 41z" fill="#005ab4" />
        <path d="M655 265l46-11 10 46-47 11-28 57-71 139 14 67 182-45 15 69-46 11-9-41-163 41-6-28-24 5-9-45z" fill="#004e9b" />
      </g>
      <g stroke="#fff" strokeOpacity="0.45">
        <circle cx="784" cy="422" r="226" />
        <circle cx="784" cy="196" r="14" />
        <circle cx="784" cy="649" r="14" />
        <circle cx="558" cy="422" r="14" />
        <circle cx="1010" cy="422" r="14" />
      </g>
      <path d="M258 627l6 7" stroke="#f00" strokeWidth="4" />
      <circle cx="264" cy="634" r="4" fill="#f00" />
      <path d="M276 627l9 10M285 627l-9 10" stroke="#f00" />
      <path d="M258 627l40-9" stroke="#0f0" strokeWidth="4" />
      <path d="M293 613l12 4-10 8z" fill="#0f0" />
      <path d="M258 625l-8-38" stroke="#007bff" strokeWidth="4" />
      <path d="M248 582l6 9-7 3z" fill="#007bff" />
      <path d="M242 573h8l-9 9h9" stroke="#007bff" />
    </svg>
  );
}

function SogouLogo({ className }: { className: string }) {
  return (
    <svg viewBox="0 0 26 26" className={className} aria-hidden>
      <path d="M2 5L21 1l4 20-19 4z" fill="#f0501e" stroke="#f0501e" strokeWidth="2" strokeLinejoin="round" />
      <path d="M19 7C10 5 7 8 8 10s10 2 10 5-5 4-11 3" fill="none" stroke="#fff" strokeWidth="3" />
    </svg>
  );
}

function AppLogo({ className }: { className: string }) {
  return (
    <svg viewBox="0 0 24 24" className={className} fill="none" aria-hidden>
      <rect width="24" height="24" rx="4" fill="#0b8df0" />
      <path d="M11 4.500h3M13 5v12c0 3-5 3-5 0M4 12.500h5M4 12c0 3 1 3 3 3M13 12.500h7c0 2-1 3-3 3M9 12c-3 0-3-4 0-4M13 8c3 0 5 1 6 4" stroke="#fff" strokeWidth="2" />
    </svg>
  );
}

function Mic({ className }: { className: string }) {
  return (
    <svg viewBox="0 0 16 18" className={className} fill="none" stroke="currentColor" aria-hidden>
      <rect x="5" y="1" width="6" height="10" rx="1" />
      <path d="M3 8v5h10V8M8 13v4M5 17h6" />
    </svg>
  );
}

function ImeBar() {
  return (
    <div className="absolute bottom-[51px] left-[606px] flex h-6 w-[181px] items-center border border-[#a9c3dd] bg-white pl-[26px] text-[#2277c9] shadow">
      <SogouLogo className="absolute -top-1 -left-[5px] size-7" />
      <button className="w-[22px] text-[15px] leading-5 font-bold">中</button>
      <button className="flex w-[21px] justify-center" aria-label="标点">
        <svg viewBox="0 0 14 14" className="size-3.5" fill="none" stroke="currentColor">
          <circle cx="4" cy="4" r="1.500" strokeWidth="1.500" />
          <path d="M11 7c2 2 0 5-2 6" strokeWidth="2" />
        </svg>
      </button>
      <button className="flex w-[23px] justify-center" aria-label="语音">
        <svg viewBox="0 0 14 16" className="h-4 w-3.5" fill="none" stroke="currentColor" strokeWidth="1.500">
          <rect x="4.500" y="1" width="5" height="8" rx="2.500" fill="currentColor" />
          <path d="M2 7c0 6 10 6 10 0M7 12v3M4 15h6" />
        </svg>
      </button>
      <button className="flex w-[22px] justify-center" aria-label="软键盘">
        <svg viewBox="0 0 16 12" className="h-3 w-4" fill="none" stroke="currentColor">
          <rect x="1" y="1" width="14" height="10" rx="1" strokeWidth="1.500" />
          <path d="M3 4h10M3 6h10" strokeDasharray="1.500 1" />
          <path d="M4 8.500h8" />
        </svg>
      </button>
      <button className="flex w-[24px] justify-center text-[#a9b9cf]" aria-label="登录">
        <svg viewBox="0 0 16 16" className="size-4" fill="currentColor">
          <circle cx="6" cy="4" r="3" />
          <path d="M1 13c0-7 10-7 10-3v5H1zM8 9h8v6H8z" />
          <path d="M10.500 10v4M12.500 10.500v3h2v-2h-2" fill="none" stroke="#fff" />
        </svg>
      </button>
      <button className="flex w-[19px] justify-center" aria-label="皮肤"><Shirt className="size-4 fill-current" /></button>
      <button className="flex w-[22px] justify-center" aria-label="工具箱"><Wrench className="size-3.5 fill-current" /></button>
    </div>
  );
}

const pinned: { name: string; state?: string; art: ReactNode }[] = [
  {
    name: "风扇",
    art: (
      <>
        <g fill="#e6e6e6">
          <rect x="1" y="1" width="11" height="11" rx="4" />
          <rect x="12" y="1" width="11" height="11" rx="4" />
          <rect x="1" y="12" width="11" height="11" rx="4" />
          <rect x="12" y="12" width="11" height="11" rx="4" />
        </g>
        <path d="M14 1c-3 2-4 5-2 11M23 14c-2-3-5-4-11-2M10 23c3-2 4-5 2-11M1 10c2 3 5 4 11 2" stroke="#02090b" strokeWidth="1.500" />
      </>
    ),
  },
  {
    name: "浏览器",
    art: (
      <path d="M21 3c-1 2-3 2-5 2C8 2 2 7 3 13c1 7 10 10 15 6 5-5 2-11-3-11-4 0-6 3-5 6 1 2 5 2 6 0h2c-1 5-9 6-10 0-1-5 4-8 8-8" stroke="#d8d8d8" strokeWidth="1.500" />
    ),
  },
  {
    name: "Edge",
    art: <path d="M2 11C3 4 8 1 13 1c7 0 10 6 9 12H9c0 6 7 7 12 4v4C11 26 2 21 5 13c1-3 4-5 6-6-6 0-9 4-9 4zM9 10h7c0-5-7-5-7 0z" fill="#0f7bdc" fillRule="evenodd" />,
  },
  {
    name: "应用商店",
    art: (
      <>
        <path d="M7 7c0-7 9-7 9 0" stroke="#fff" strokeWidth="1.500" />
        <path d="M2 7h19v14l-19 2z" fill="#fff" />
        <path d="M6 11l5-1v4H6zM12 10l6-1v5h-6zM6 15h5v5l-5-1zM12 15h6v5h-6z" fill="#02090b" />
      </>
    ),
  },
  {
    name: "文件资源管理器",
    art: (
      <>
        <path d="M1 3h8l2 3h11v14H1z" fill="#f8d775" />
        <path d="M1 7h21v13H1z" fill="#fce9a4" />
        <path d="M6 12h13v9h-4v-5h-5v5H6z" fill="#3fa9e0" />
      </>
    ),
  },
  {
    name: "记事本",
    state: "open",
    art: (
      <>
        <rect x="1" y="1" width="22" height="22" rx="2" fill="#f29a1c" />
        <path d="M4 5l14-1 2 15-14 2z" fill="#fffbe8" />
        <path d="M7 9h8M7 12h7M8 15h6" stroke="#9a8a62" />
        <path d="M21 2l-9 13-1 4 3-2 8-13z" fill="#7a4010" />
      </>
    ),
  },
  { name: "GGJ2013", state: "active", art: null },
  {
    name: "广联达",
    state: "open",
    art: (
      <>
        <path d="M17 6C8 2 3 8 4 14c1 6 8 8 13 5 3-2 3-6 2-9-3-2-7 0-7 4" stroke="#1690ea" strokeWidth="4" />
        <path d="M13 3c4 1 7 0 9-1 0 4-3 6-6 6z" fill="#58c3f7" />
      </>
    ),
  },
  {
    name: "360浏览器",
    state: "open",
    art: (
      <>
        <circle cx="12" cy="12" r="10" fill="#5cc72c" stroke="#e9fbe0" strokeWidth="1.500" />
        <path d="M7 12h10c0-6-10-6-10 0s7 6 10 3" stroke="#fff" strokeWidth="3" />
        <path d="M3 22C1 15 12 3 21 2" stroke="#2f9d1c" strokeWidth="1.500" />
      </>
    ),
  },
];

function Taskbar() {
  const cell = "flex h-full w-6 shrink-0 items-center justify-center";
  return (
    <footer className={`flex h-10 shrink-0 items-center bg-[#020b0e] text-white ${UI_FONT}`}>
      <button className="flex h-full w-12 shrink-0 items-center justify-center bg-black" aria-label="开始">
        <svg viewBox="0 0 16 16" className="size-4" fill="#fff">
          <path d="M0 2l7-1v6.500H0zM8 1l8-1v7.500H8zM0 8.500h7V15l-7-1zM8 8.500h8V16l-8-1z" />
        </svg>
      </button>
      <label className="flex h-full w-[344px] shrink-0 items-center bg-[#333] pr-3 pl-[9px]">
        <span className="size-[22px] shrink-0 rounded-full border-[3px] border-white" />
        <input aria-label="搜索" placeholder="在这里输入你要搜索的内容" className="ml-[5px] min-w-0 flex-1 bg-transparent text-sm outline-none placeholder:text-[#9b9b9b]" />
        <Mic className="h-[18px] w-4 text-[#b5b5b5]" />
      </label>
      {pinned.map((p, i) => (
        <button
          key={p.name}
          aria-label={p.name}
          className={`flex h-full w-[49px] shrink-0 items-center justify-center ${i === 2 ? "ml-1.5" : ""} ${p.state === "active" ? "border-b-2 border-[#76b9ed] bg-[#333c40]" : ""} ${p.state === "open" ? "bg-linear-to-r from-[#76b9ed] to-[#76b9ed] bg-[length:38px_2px] bg-bottom bg-no-repeat" : ""}`}
        >
          {p.art ? <svg viewBox="0 0 24 24" className="size-[22px]" fill="none">{p.art}</svg> : <AppLogo className="size-[22px]" />}
        </button>
      ))}
      <span className="flex-1" />
      <div className="w-[76px] shrink-0 text-center text-xs leading-[17px]">44%<br />CPU使用</div>
      <button className={cell} aria-label="更多"><ChevronUp className="size-4" /></button>
      <span className={cell}>
        <svg viewBox="0 0 16 14" className="h-3.5 w-4" fill="none" stroke="#fff">
          <path d="M5.500 4.500h9v7h-9zM1 3h5M2 0v3M5 0v3M1.500 3v2l2 2v4h2" />
          <path d="M7 6h6v4H7z" fill="#fff" />
        </svg>
      </span>
      <span className={cell}>
        <svg viewBox="0 0 14 14" className="size-3.5" fill="none" stroke="#ddd">
          <path d="M1 12C1 6 6 2 13 2M4 13c0-5 4-8 9-8M7 13c0-3 3-5 6-5M10 13c0-1 1-2 3-2" />
        </svg>
      </span>
      <span className={cell}>
        <svg viewBox="0 0 16 14" className="h-3.5 w-4" fill="none" stroke="#fff">
          <path d="M1 5h2l4-4v12L3 9H1z" />
          <path d="M9 5c1 1 1 3 0 4" />
          <path d="M11 3c2 2 2 6 0 8M13 1c3 3 3 9 0 12" stroke="#777" />
        </svg>
      </span>
      <span className={`${cell} text-[13px]`}>中</span>
      <span className="flex w-8 shrink-0 justify-center"><SogouLogo className="size-4" /></span>
      <div className="w-[76px] shrink-0 text-center text-xs leading-[19px]">22:28<br />2017/7/24</div>
      <button className="flex w-11 shrink-0 justify-center" aria-label="通知">
        <svg viewBox="0 0 24 26" className="h-[26px] w-6">
          <path d="M1 3h15v12H8l-3 3v-3H1z" fill="#fff" />
          <path d="M4 6.500h9M4 9.500h9M4 12.500h6" stroke="#111" />
          <circle cx="16" cy="17" r="7" fill="#333" stroke="#aaa" />
          <text x="16" y="21" textAnchor="middle" fill="#fff" className="text-[11px] font-bold">2</text>
        </svg>
      </button>
      <span className="h-full w-2 border-l border-[#555]" />
    </footer>
  );
}

export default function App() {
  const cell = "flex items-center border border-[#d5d5d5] bg-linear-to-b from-white to-[#f0f0f0] pl-0.5";
  return (
    <div className={`relative flex h-screen flex-col overflow-hidden bg-[#f0f0f0] text-xs text-black ${UI_FONT}`}>
      <header className="flex h-[23px] shrink-0 items-center bg-white pl-0.5">
        <AppLogo className="size-4" />
        <h1 className="ml-1 flex-1 font-['Inter','Noto_Sans_CJK_SC',sans-serif] whitespace-nowrap">广联达BIM钢筋算量软件 GGJ2013 - [C:\Users\Administrator.PC-20141127NRHM\Desktop\白龙村-2016-08-25-13-27-07(2166版)_16G.GGJ12]</h1>
        <button className="flex w-[46px] justify-center" aria-label="最小化"><Minus className="size-3.5" strokeWidth={1.500} /></button>
        <button className="flex w-[46px] justify-center" aria-label="还原">
          <svg viewBox="0 0 11 11" className="size-[11px]" fill="none" stroke="#111">
            <path d="M.5 2.500h8v8h-8zM2.500 2V.5h8v8H9" />
          </svg>
        </button>
        <button className="flex w-[46px] justify-center" aria-label="关闭"><X className="size-4" strokeWidth={1.500} /></button>
      </header>
      <div className="absolute -top-[25px] left-[1083px] flex size-11 items-end justify-center rounded-full border-2 border-[#f0fff0] bg-[#3fc45d] pb-0.5 text-[11px] leading-4 font-bold text-white shadow-[0_0_4px_#555]">71</div>

      <nav className="flex h-[31px] shrink-0 items-center pl-[7px] whitespace-nowrap">
        <div className="mr-[5px] flex w-[771px] shrink-0 justify-between">
          {menus.map((m) => (
            <button key={m}>{m}</button>
          ))}
        </div>
        <Tool icon="changeDoc" label="新建变更" caret />
        <Tool icon="mascot" label="广小二" />
        <div className={`${BAR} ml-[3px] h-[27px] w-[188px] shrink-0 justify-center text-[13px] text-[#2e6b00]`}>多边形编辑器的网格尺..</div>
        <div className={`${BAR} ml-px h-[27px] min-w-0 flex-1`}>
          <Tool icon="user" label="13907298339" caret />
          <span className="ml-0.5">造价豆:0</span>
          <button className="ml-2" aria-label="消息"><Icon name="bell" /></button>
          <span className="flex-1" />
          <More />
        </div>
      </nav>

      <div className="flex h-[30px] shrink-0 items-start gap-px">
        <div className={`${BAR} h-[27px] w-[150px] shrink-0 pl-[5px]`}>
          <button aria-label="新建"><Icon name="page" /></button>
          <button className="ml-1.5 flex items-center gap-1" aria-label="打开"><Icon name="open" /><Caret /></button>
          <button className="ml-1.5" aria-label="保存"><Icon name="save" /></button>
          <span className="mr-1.5 ml-1.5 h-6 w-px bg-[#9a9a9a]" />
          <button className="flex items-center gap-1.5" aria-label="撤销"><Icon name="undo" /><Caret /></button>
          <span className="flex-1" />
          <More />
        </div>
        <div className={`${BAR} h-[27px] w-[550px] shrink-0 pl-0.5`}>
          <Tool icon="form" label="定义" />
          <Tool icon="sigma" label="汇总计算" />
          <Tool icon="cloud" label="云检查" />
          <Tool icon="level" label="平齐板顶" off />
          <Tool icon="binoculars" label="查找图元" />
          <Tool icon="glasses" label="查看钢筋量" />
          <Tool icon="batch" label="批量选择" off />
          <span className="flex-1" />
          <More />
        </div>
        <div className={`${BAR} h-[27px] min-w-0 flex-1 pl-0.5`}>
          <Tool icon="cube" label="三维" caret />
          <Tool icon="cubeTop" label="俯视" caret />
          <Tool icon="orbit" label="动态观察" on />
          <Tool icon="part3d" label="局部三维" off />
          <Sep />
          <Tool icon="fit" label="全屏" />
          <div className="flex h-[23px] shrink-0 items-center bg-[#b5d7f3] outline outline-1 -outline-offset-1 outline-[#0078d7]">
            <Tool icon="zoom" label="缩放" />
            <button className="flex h-full w-3 items-center justify-center border-l border-[#0078d7]" aria-label="缩放选项"><Caret tight /></button>
          </div>
          <Tool icon="pan" label="平移" caret />
          <Tool icon="rotateView" label="屏幕旋转" tight />
          <Sep />
          <Tool icon="floors" label="选择楼层" />
          <span className="flex-1" />
          <More />
        </div>
      </div>

      <div className="flex min-h-0 flex-1">
        <Sidebar />
        <main className="flex min-w-0 flex-1 flex-col">
          <div className="flex h-7 shrink-0 items-start">
            <div className={`${BAR} h-[25px]`}>
              <Grip />
              <Tool icon="brush" label="删除" />
              <Sep />
              <Tool icon="copy" label="复制" />
              <Tool icon="mirror" label="镜像" />
              <Sep />
              <Tool icon="move" label="移动" />
              <Tool icon="rotate" label="旋转" />
              <Sep />
              <Tool icon="extend" label="延伸" />
              <Tool icon="trim" label="修剪" />
              <Sep />
              <Tool icon="breakLine" label="打断" />
              <Tool icon="merge" label="合并" />
              <Tool icon="split" label="分割" off />
              <Sep />
              <Tool icon="align" label="对齐" tight />
              <Tool icon="offset" label="偏移" />
              <Tool icon="stretch" label="拉伸" />
              <Sep />
              <Tool icon="grip" label="设置夹点" off />
            </div>
          </div>
          <div className="flex h-7 shrink-0 items-start">
            <div className={`${BAR} h-[25px]`}>
              <Grip />
              <span className="w-0.5" />
              <Combo label="楼层" value="首层" className="w-[57px]" />
              <Combo label="构件类别" value="自定义" className="w-[69px]" />
              <Combo label="构件类型" value="自定义线" className="w-[69px]" />
              <Combo label="构件" value="ZDYX-42" className="w-[69px]" />
              <Sep />
              <Tool icon="props" label="属性" />
              <Tool icon="rebar" label="编辑钢筋" />
              <Tool icon="list" label="构件列表" />
              <Tool icon="dropper" label="拾取构件" />
            </div>
            <div className={`${BAR} ml-[75px] h-[25px]`}>
              <Grip />
              <Tool icon="twoPoint" label="两点" />
              <Tool icon="parallel" label="平行" />
              <Tool icon="angle" label="点角" caret />
              <Tool icon="arcAxis" label="三点辅轴" caret />
              <Tool icon="brush" label="删除辅轴" />
              <Tool icon="dimension" label="尺寸标注" caret />
            </div>
          </div>
          <div className="flex h-7 shrink-0 items-center justify-between pr-0.5">
            <div className={`${BAR} h-[26px]`}>
              <Grip />
              <Tool icon="cursor" label="选择" caret />
              <Sep />
              <Tool icon="line" label="直线" />
              <Tool icon="pointLen" label="点加长度" />
              <Tool icon="circle" label="圆" caret />
              <Combo label="半径" value="" className="w-[55px]" />
              <Tool icon="rect" label="矩形" />
              <Sep />
              <Tool icon="smart" label="智能布置" tight />
            </div>
            <div className={`${BAR} h-[26px] w-[30px]`}>
              <Grip />
            </div>
          </div>
          <Scene />
          <div className="flex h-[30px] shrink-0 items-center">
            <div className={`${BAR} h-[26px] pl-0.5`}>
              <Grip />
              <Tool icon="ortho" label="正交" />
              <Tool icon="snap" label="对象捕捉" on />
              <Tool icon="dynInput" label="动态输入" on />
              <span className="w-1" />
              <Grip />
              <Tool icon="cross" label="交点" />
              <Tool icon="perp" label="垂点" on />
              <Tool icon="mid" label="中点" on />
              <Tool icon="vertex" label="顶点" />
              <Tool icon="coord" label="坐标" />
            </div>
          </div>
        </main>
      </div>

      <div className="flex h-[21px] shrink-0 gap-0.5 py-px font-['Liberation_Mono','Noto_Sans_CJK_SC',monospace] text-[10px] whitespace-nowrap">
        <span className={`${cell} w-[148px]`}>X=30621 Y=4041</span>
        <span className={`${cell} w-[78px]`}><span className="text-xs">层高</span>:4.5m</span>
        <span className={`${cell} w-[98px]`}><span className="text-xs">底标高</span>:-0.03m</span>
        <span className={`${cell} w-12`}>1(1)</span>
        <span className={`${cell} flex-1`} />
        <span className={`${cell} w-[70px]`}>351.5 FPS</span>
      </div>
      <ImeBar />
      <Taskbar />
    </div>
  );
}
